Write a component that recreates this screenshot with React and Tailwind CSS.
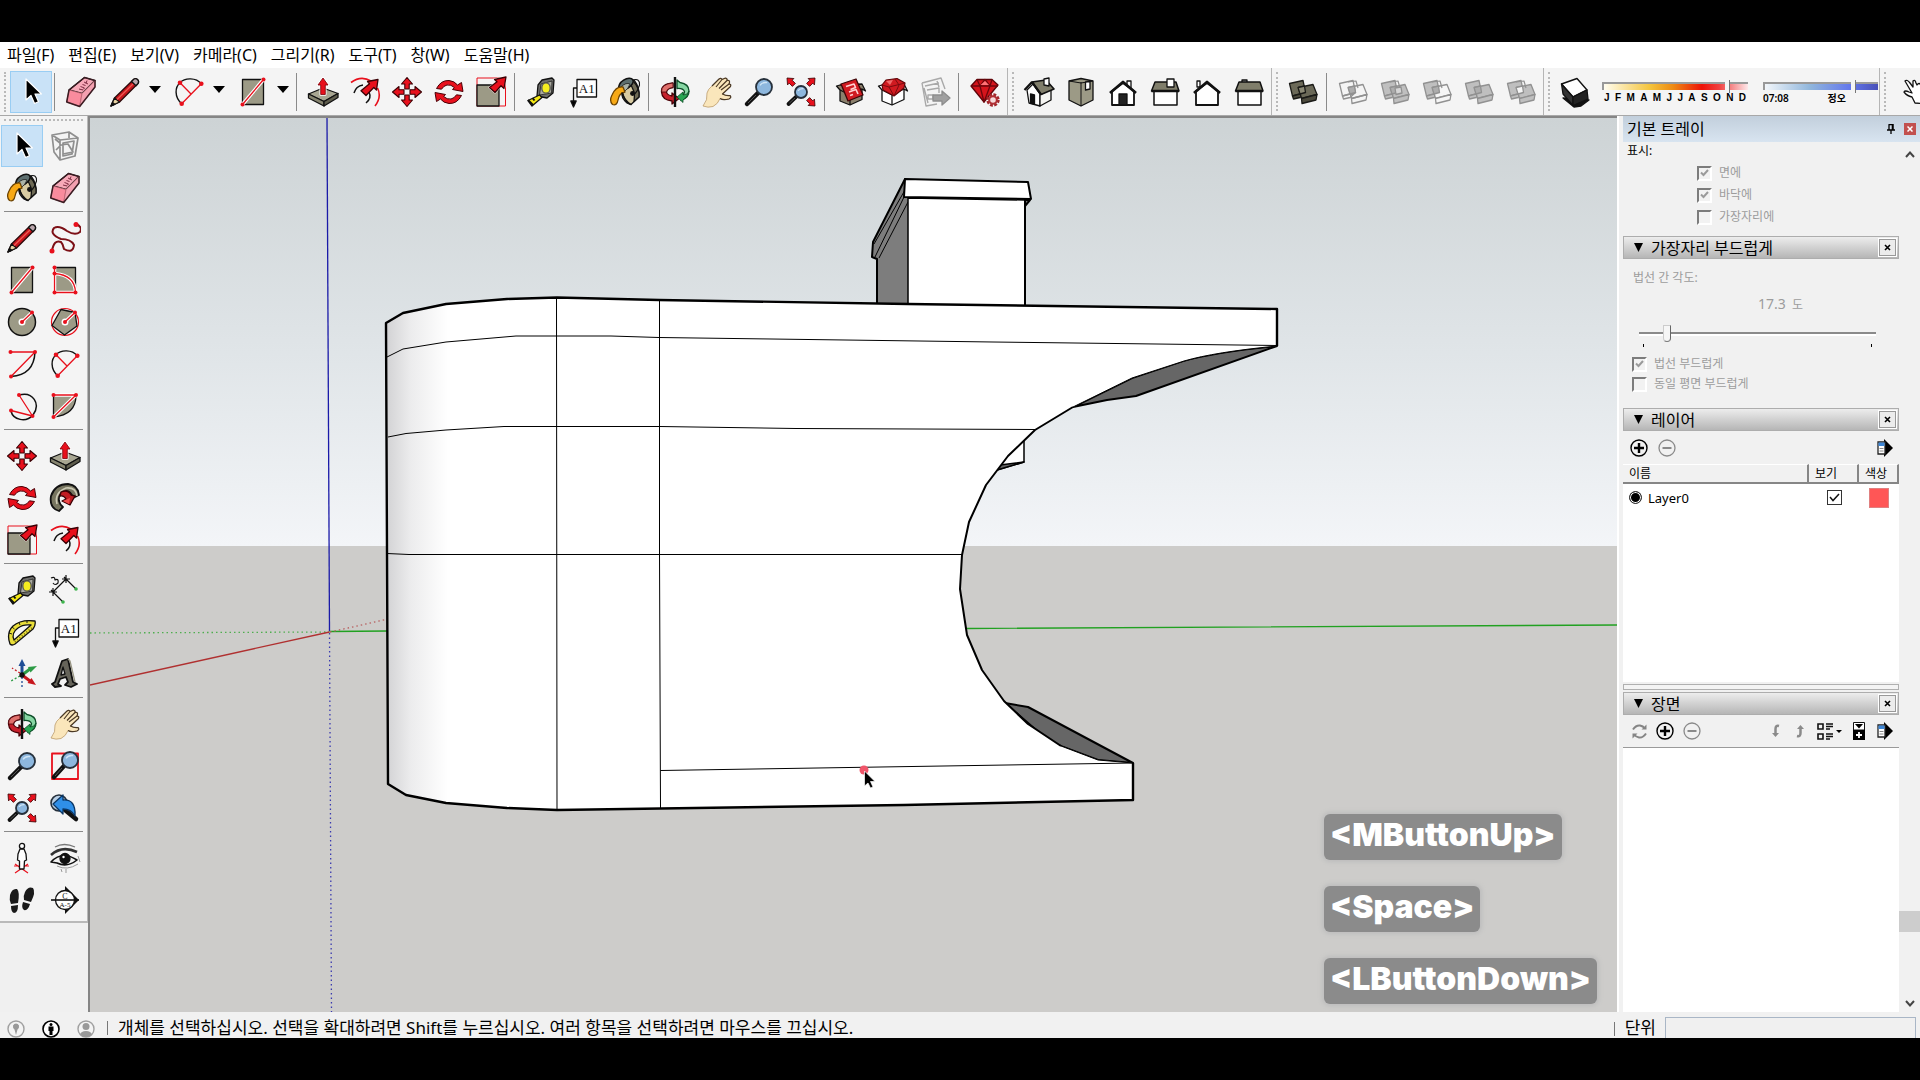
import React from "react";

const RED = "#e8101c";
const OLIVE = "#9c9a86";

function Icon({ children, size = 32 }) {
  return (
    <svg viewBox="0 0 32 32" width={size} height={size} fill="none" stroke="#111" strokeWidth="1.3" strokeLinejoin="round" aria-hidden="true" className="shrink-0">
      {children}
    </svg>
  );
}

function RedArrow({ x, y, r = 0, s = 1, stroke = "#300" }) {
  return (
    <path
      d="M0 0 L6 7 H2.8 V13 H-2.8 V7 H-6 Z"
      transform={`translate(${x} ${y}) rotate(${r}) scale(${s})`}
      fill={RED}
      stroke={stroke}
      strokeWidth="1"
    />
  );
}

function Dot({ x, y, r = 2 }) {
  return <circle cx={x} cy={y} r={r} fill={RED} stroke="none" />;
}

const Cursor = () => (
  <Icon>
    <path d="M11 3 V24 L16 19.5 L19.5 27.5 L23.5 25.8 L20 18 H26.5 Z" fill="#000" stroke="#fff" strokeWidth="1.2" />
  </Icon>
);
const Eraser = () => (
  <Icon>
    <path d="M19.5 1.5 L30 4.5 L17 17.5 L4 14 Z" fill="#f7a9b8" />
    <path d="M4 14 L17 17.5 L14.7 30.5 L1.7 26 Z" fill="#f98b9d" stroke="#b9606f" strokeWidth="0.8" />
    <path d="M17 17.5 L30 4.5 V11 L14.7 30.5 Z" fill="#f3a0b0" stroke="#b9606f" strokeWidth="0.8" />
    <path d="M19.5 1.5 L30 4.5 V11 L14.7 30.5 L1.7 26 L4 14 Z" stroke="#3a1c22" strokeWidth="1.5" />
    <path d="M14 13 l4 1 M15.500 10.500 l4 1.500 l-1.500 1.500 M17.500 8.500 l3 1 M19 6 l4 2 M21 7.500 l1 -3" stroke="#7d2c42" strokeWidth="1" />
  </Icon>
);
const Pencil = () => (
  <Icon>
    <path d="M2 30 L5.5 22 L24 4 Q26 1.5 28.5 3.5 Q30.5 6 28.5 8 L10.5 26 Z" fill="#c5141c" stroke="#2a0a0a" />
    <path d="M2 30 L5.5 22 L10.5 26 Z" fill="#e9d3a4" />
    <path d="M2 30 L3.5 26.5 L5.7 28.3 Z" fill="#111" />
    <path d="M22.5 5.5 L27 9.8 L29 7.5 Q30.5 5.5 28.5 3.5 Q26 1.5 24 4 Z" fill="#b9a5ab" />
    <path d="M8 23.5 L24 8" stroke="#ee5a52" />
  </Icon>
);
const PieArc = () => (
  <Icon>
    <path d="M8.7 27.7 C1 21 2 11 7 6.7 C12 1.5 23 1.5 28.3 7.7" strokeWidth="1.4" />
    <path d="M7 6.7 L18 18 M8.7 27.7 L28.3 7.7" stroke={RED} />
    <Dot x={7} y={6.7} r={2.3} /><Dot x={28.3} y={7.7} r={2.3} /><Dot x={8.7} y={27.7} r={2.3} />
  </Icon>
);
const Rect = () => (
  <Icon>
    <path d="M5.5 3.5 H26.5 V28.5 H5.5 Z" fill={OLIVE} />
    <path d="M5.5 28.5 L26.5 3.5" stroke="#fff" strokeWidth="3.6" />
    <path d="M5.5 28.5 L26.5 3.5" stroke={RED} />
    <Dot x={5.5} y={28.5} /><Dot x={26.5} y={3.5} />
  </Icon>
);
const PushPull = () => (
  <Icon>
    <path d="M1.5 18 L16 12 L31 17.5 L17 25.5 Z" fill="#a8a692" />
    <path d="M1.5 18 L17 25.5 V30 L1.5 22 Z" fill="#86846f" />
    <path d="M17 25.5 L31 17.5 V21.5 L17 30 Z" fill="#5f5d4d" />
    <path d="M16 2 L21 9 H18.3 V18.5 H13.7 V9 H11 Z" fill={RED} stroke="#fff" strokeWidth="2.4" />
    <path d="M16 2 L21 9 H18.3 V18.5 H13.7 V9 H11 Z" fill={RED} stroke="#7a0008" strokeWidth=".8" />
  </Icon>
);
const Offset = () => (
  <Icon>
    <path d="M2 6.5 Q12 -1 22 5 M28.5 12 Q33 21 26 30" stroke={RED} strokeWidth="1.6" />
    <path d="M5 17 Q7 10 14 9 M20 16 Q23 22 17 27" strokeWidth="1.5" />
    <path d="M29 3.5 L27.5 14 L24.8 11.5 L17 19.5 L12 14.8 L20.5 7.8 L18.5 5.5 Z" fill={RED} stroke="#3a0004" />
  </Icon>
);
const Move = () => (
  <Icon>
    {[0, 90, 180, 270].map((a) => (
      <path key={a} d="M16 1.5 L21.5 8 H18.2 V13 H13.8 V8 H10.5 Z" transform={`rotate(${a} 16 16)`} fill={RED} stroke="#3a0004" strokeWidth="1.1" />
    ))}
  </Icon>
);
const Rotate = () => (
  <Icon>
    {[0, 180].map((a) => (
      <path key={a} d="M3.5 12.5 Q8 4 16 4.5 Q21.5 5 24.5 9 L28.5 6.5 L30 15.5 L19.5 13.5 L21.3 11.5 Q18 8.3 14 9 Q10.5 9.8 8.5 13.2 Z" transform={`rotate(${a} 16 16)`} fill={RED} stroke="#4a0006" strokeWidth="1" />
    ))}
  </Icon>
);
const Scale = () => (
  <Icon>
    <path d="M2 2 H30.5 V30 H2 Z" stroke={RED} strokeWidth="1" />
    <path d="M2 9 H24 V30 H2 Z" fill={OLIVE} />
    <path d="M31 1 L29 12.5 L26 9.8 L20 16.5 L14.5 11.5 L22 5.8 L19.5 3.5 Z" fill={RED} stroke="#fff" strokeWidth="2" />
    <path d="M31 1 L29 12.5 L26 9.8 L20 16.5 L14.5 11.5 L22 5.8 L19.5 3.5 Z" fill={RED} stroke="#3a0004" />
  </Icon>
);
const Tape = () => (
  <Icon>
    <path d="M13 9 L17 4 L27 2 L29 4 L28 17 L22 22 L12 20 Z" fill="#6f6f6c" />
    <path d="M16 8 L27 5 L26.5 17 L14.5 19 Z" fill="#a9a9a0" strokeWidth=".7" />
    <ellipse cx="21" cy="12" rx="4.2" ry="5.2" fill="#f6ee20" stroke="#555" />
    <path d="M14.5 19 L17 21.5 L7 30 L3 24.5 Z" fill="#f4e814" />
    <path d="M3 24 L8 29 M7.5 22 L9.5 24.5" strokeWidth="2" />
  </Icon>
);
const TextTool = () => (
  <Icon>
    <path d="M10 3.5 H29.5 V21 H10 Z" fill="#fff" />
    <path d="M10 12 H6.5 V27" />
    <path d="M3.8 25 H9.2 L6.5 31 Z" fill="#000" />
    <text x="19.8" y="16.500" textAnchor="middle" fontFamily="Liberation Serif" fontSize="13" fill="#111" stroke="none">A1</text>
  </Icon>
);
const Paint = () => (
  <Icon>
    <path d="M13 10 L25 4 Q31 12 30 21 L22 28.500 Q14 27 13 10 Z" fill="#d8cba2" />
    <path d="M24 5 Q31 12 30 21 L25 25.500 Q27 14 20 7 Z" fill="#6e6a55" />
    <ellipse cx="17" cy="8" rx="8" ry="4.500" transform="rotate(-32 17 8)" fill="#5d6f6f" strokeWidth="1.600" />
    <path d="M12 11 Q17 6 21 8 Q20 12 14 17 Z" fill="#aab3a8" strokeWidth=".700" />
    <path d="M14 11 Q7 10 3 19 Q0 25 3.5 28.5 Q8 30 9 24 Q10 17 16 16 Z" fill="#f7a916" stroke="#6b4200" />
    <path d="M24 4 Q31 2 30.500 9 Q29 15 25 19" strokeWidth="1.100" />
    <path d="M13 17 Q16 25 22 28.500 L18 27 Q12 22 13 17 Z" fill="#4e4a3a" />
    <circle cx="23.5" cy="17.5" r="1.8" fill="#111" />
  </Icon>
);
const Orbit = () => (
  <Icon>
    <path d="M14 7 Q2 8 2.5 16 Q3 24 13 25 V28 L20 22.5 L13 17 V20 Q8 19 7.5 16 Q8 12 14 11.5 Z" fill="#c8202c" stroke="#4a0006" />
    <path d="M14 7 Q2 8 2.500 16 L7.500 16 Q8 12 14 11.500 Z" fill="#e0706c" stroke="#4a0006" strokeWidth=".800" />
    <path d="M18 7 V4 L21 6.5 Q30 8 30 15 Q30 22 22 24.5 V20 Q25.5 18.5 25.5 15.5 Q24 12 18 12.5 Z" fill="#86d6a3" stroke="#0c4d27" />
    <path d="M24 19 V16 L18 21 L24 26.5 V24 Q29 21 30 15 Q29 19 24 19 Z" fill="#27a552" stroke="#0c4d27" strokeWidth=".8" />
    <path d="M16 1 V31" strokeWidth="2.4" />
  </Icon>
);
const Hand = () => (
  <Icon>
    <path d="M2 30 Q7 24 6 17 Q7 13 11 10 L18 3 Q20 1.5 21 3.5 L24 2.2 Q26.5 2 26 4.5 Q29 3.8 28.5 6.5 L28 8 Q30.5 8 29.5 10.5 L21.5 18 Q25 20 29 19.5 Q31 21.5 28 23 Q22 24.5 19 22.5 Q17 28 12 30.5 Q7 32 2 30 Z" fill="#fae6bb" stroke="#bd9c6a" strokeWidth=".8" />
    <path d="M11 10 L18 3 Q20 1.5 21 3.5 L24 2.2 Q26.5 2 26 4.5 Q29 3.8 28.5 6.5 L28 8 Q30.5 8 29.5 10.5 L21.5 18 Q25 20 29 19.5 Q31 21.5 28 23 Q22 24.5 19 22.5 M15 11 L21 3.5 M18 12.5 L26 4.5 M20 14 L28 8" stroke="#4a3926" strokeWidth="1.2" />
  </Icon>
);
function Lens({ x = 21, y = 11, r = 8, hx = 4, hy = 28, w = 4.5 }) {
  return (
    <g>
      <path d={`M${x - r * 0.7} ${y + r * 0.7} L${hx} ${hy}`} stroke="#111" strokeWidth={w} strokeLinecap="round" />
      <path d={`M${x - r} ${y + r} L${hx + 1} ${hy - 1}`} stroke="#555" strokeWidth="1" />
      <circle cx={x} cy={y} r={r} fill="#8db7de" stroke="#26303b" strokeWidth="1.8" />
      <path d={`M${x - r * 0.5} ${y - r * 0.2} Q${x - r * 0.2} ${y - r * 0.65} ${x + r * 0.4} ${y - r * 0.55}`} stroke="#cfe4f5" strokeWidth="1.4" />
    </g>
  );
}
const Zoom = () => <Icon><Lens /></Icon>;
const ZoomWindow = () => (
  <Icon>
    <path d="M3 3.5 H29 V29 H3 Z" stroke={RED} strokeWidth="1.8" />
    <Lens x={21} y={10} r={8} hx={5} hy={27} />
  </Icon>
);
const ZoomExtents = () => (
  <Icon>
    <RedArrow x={2} y={2} r={-45} s={0.75} />
    <RedArrow x={30} y={2} r={45} s={0.75} />
    <RedArrow x={30} y={30} r={135} s={0.75} />
    <Lens x={16} y={16} r={6} hx={3.5} hy={28} w={3.8} />
  </Icon>
);
const Previous = () => (
  <Icon>
    <circle cx="10" cy="11" r="8" fill="#b9cfe4" stroke="#26303b" strokeWidth="1.6" />
    <path d="M16 18 L27 27" strokeWidth="4.5" strokeLinecap="round" />
    <path d="M4 12 L14 3 V8 Q27 7 26 24 Q22 17 14 17 V22 Z" fill="#2f8fe8" stroke="#0b3562" />
  </Icon>
);
function BoxIcon({ gem }) {
  return (
    <Icon>
      <path d="M5 9 L1.500 10 L5 14 V25 L15 29 L27 23.500 V13 L30.500 15 L27 8 Z" fill={gem ? "#fff" : "#8b806c"} strokeWidth="1.3" />
      <path d="M5 14 L15 19 L27 13 M15 19 V29" fill="none" strokeWidth="1.3" />
      {gem ? (
        <g>
          <path d="M5 9 L9 4 L20 2.500 L28 7 L27 12 L17 20 L6 14 Z" fill="#d01a20" stroke="#5e0508" strokeWidth="1.2" />
          <path d="M5 9 L12 11 L28 7 M12 11 L17 20 L22 9 L18 3" fill="none" stroke="#7c0a0e" strokeWidth="1" />
          <path d="M9 5 L16 4 L13 9 Z" fill="#ee6b6b" stroke="none" />
        </g>
      ) : (
        <g>
          <path d="M6 8 L21 3 L28 19 L13 25 Z" fill="#d01a20" stroke="#3d0507" />
          <path d="M11 10.500 L19 8 L20.500 11.500 L15.500 13.500 M14 16 L21 13.500 L23 18 M15 19.500 L18 18.500" stroke="#ffd3d3" strokeWidth="1.6" />
        </g>
      )}
    </Icon>
  );
}
const Warehouse = () => <BoxIcon />;
const ExtWarehouse = () => <BoxIcon gem />;
const SendLayout = () => (
  <Icon>
    <path d="M3 7 L22 2 L26 13 M3 7 L7 30 L18 28 M6 10 L20 7 M5 12 L9 27 M8 14 L20 12 V17 M9 19 h5 v4 h-5 Z M18 5 l2 6" stroke="#a9a9a9" strokeWidth="1.4" />
    <path d="M14 19 H23 V15 L31 22 L23 29 V25 H14 Z" fill="#a0a0a0" stroke="#8d8d8d" />
  </Icon>
);
const Ruby = () => (
  <Icon>
    <path d="M2 10 L8 3.5 H23 L29 9 L15 26 Z" fill="#d5141c" stroke="#5d0409" />
    <path d="M2 10 H29 M8 3.5 L11 10 L16 3.5 L21 10 L23 3.5 M11 10 L15 26 L21 10" stroke="#6e060c" />
    <path d="M11.5 9 L16 5 L20 9 Z" fill="#ff7377" stroke="none" />
    <circle cx="24" cy="24" r="5.4" stroke="#a3262b" strokeWidth="2.6" strokeDasharray="2.8 1.4" fill="none" />
    <circle cx="24" cy="24" r="3.8" fill="#f6dada" stroke="#b03035" strokeWidth="2" />
  </Icon>
);
const HouseIso = () => (
  <Icon>
    <path d="M4 14 L10 8 L17 18 V30 L6 27 Z" fill="#fff" />
    <path d="M17 19 L28 13 V24 L17 30 Z" fill="#f5f5f2" />
    <path d="M9 6 L23 4 L31 13 L18 18.5 Z" fill="#807e6b" strokeWidth="1.6" />
    <path d="M9 6 L1.5 14 M9 6 L18 18.5" strokeWidth="2.2" />
    <path d="M21 3 L26 2 V10 L21 9 Z" fill="#fff" />
    <path d="M7.500 18 L11.5 19 V28 L7.500 27 Z" fill="#111" />
  </Icon>
);
const BoxView = () => (
  <Icon>
    <path d="M4 5 L16 2.500 L28 5 V24 L16 30 L4 24 Z" fill={OLIVE} />
    <path d="M16 6 V30 M4 5 L16 7 L28 5" strokeWidth="1" />
    <path d="M20.500 6 L25 5.500 V13 L20.500 14 Z" fill="#fff" />
  </Icon>
);
const HouseFront = ({ back }) => (
  <Icon>
    {back ? <path d="M6 5 H9 V11 H6 Z" fill="#fff" /> : <path d="M20 5 H24 V12 H20 Z" fill="#fff" />}
    <path d="M5 15 L16 7 L27 15 V29 H5 Z" fill="#fff" strokeWidth="1.8" />
    <path d="M3 17 L16 6 L29 17" strokeWidth="2.800" />
    {back ? null : <path d="M12 18 H20 V29 H12 Z" fill="#222" />}
  </Icon>
);
const HouseBack = () => <HouseFront back />;
const HouseSide = ({ chimney }) => (
  <Icon>
    <path d="M5 14 H28 V29 H5 Z" fill="#fff" strokeWidth="1.500" />
    {chimney ? null : <path d="M9 6 V4 H14 V6" fill="#aaa" />}
    <path d="M6 6 H27 L30 15 H2.500 Z" fill="#807e6b" strokeWidth="1.500" />
    <path d="M2.500 15 H30" strokeWidth="2.500" />
    {chimney ? <path d="M18 3 H25 V11 H18 Z" fill="#fff" /> : null}
  </Icon>
);
const HouseRight = () => <HouseSide chimney />;

function Solid({ dark, variant }) {
  const s = dark ? "#1a1a17" : "#919191";
  const f = dark ? "#6b6958" : "#bfbfbf";
  const wire = variant === "wire";
  const back = wire ? "none" : f;
  const front = wire ? "none" : variant === "sub2" ? "#f6f6f6" : f;
  const common = variant === "hole" ? "#f6f6f6" : dark ? "#8b8975" : "#adadad";
  return (
    <Icon>
      <path d="M2.500 7.500 L16 4.500 L18.500 16.500 L5.500 20 Z" fill={back} stroke={s} />
      <path d="M5.500 20 L6.500 23 L13 21.500 L18.500 16.500 Z" fill={dark ? "#4c4a3d" : back} stroke={s} />
      <path d="M11.500 11.500 L26 8.500 L30 18.500 L14.500 22.500 Z" fill={front} stroke={s} />
      <path d="M14.500 22.500 L30 18.500 L29 24 L15 27.500 Z" fill={dark ? "#4c4a3d" : front} stroke={s} />
      <path d="M11 11.500 L17.500 10 L18.500 16.500 L13 18 Z" fill={common} stroke={s} />
      <path d="M11 6 L19 5 L21 12" stroke={s} strokeWidth={variant ? 1.2 : 0} />
      {variant === "ring" ? <path d="M16 12 L22 11 L23 17 L17 18.500 Z" fill="#d5d5d5" stroke={s} /> : null}
    </Icon>
  );
}
const OuterShell = () => <Solid dark />;
const Intersect = () => <Solid variant="wire" />;
const Union = () => <Solid variant="ring" />;
const Subtract = () => <Solid variant="sub2" />;
const Trim = () => <Solid />;
const Split = () => <Solid variant="hole" />;
const Shadow = () => (
  <Icon>
    <path d="M4 22 L30 24 L22 30 L15 31 Z" fill="#111" />
    <path d="M2.500 8 L18 2.500 L28 14 L14 21 Z" fill="#fff" strokeWidth="1.400" />
    <path d="M2.500 8 L14 21 V29.500 L4 18 Z" fill="#333" />
    <path d="M14 21 L28 14 L29 23 L14 29.500 Z" fill="#222" />
  </Icon>
);
const PointHand = () => (
  <Icon>
    <path d="M10 5 Q12 3 15 7 L18 11 V5 Q20 3 21 7 L22 9 Q24 6 26 9 Q28 7 31 9 V28 L20 27 L17 21 Q12 20 9 16 Q10 14 14 16 L17 17 Z" fill="#fff" strokeWidth="1.300" />
  </Icon>
);
const Component = () => (
  <Icon>
    <path d="M3 5 L20 2 L29 8 L26 26 L11 30 L5 22 Z M3 5 L11 10 L29 8 M11 10 V30 M6 9 L11 13 M14 13 L25 11 L23 24 L14 26 Z M20 2 V8 M7 20 L12 15 L19 14 L24 22 L14 24" stroke="#8f8f8f" strokeWidth="1.700" />
  </Icon>
);
const Freehand = () => (
  <Icon>
    <path d="M3 29 Q5 17 12 20 Q14 22 15 27 Q24 32 25 23 Q22 17 12 17 Q0 12 5 6 Q10 3 18 9 Q26 14 31 10 Q34 5 27 2" stroke="#7d1016" strokeWidth="2" />
    <Dot x={3} y={29} r={2.500} /><Dot x={27} y={2.500} r={2.500} />
  </Icon>
);
const RotRect = () => (
  <Icon>
    <path d="M5.500 3.500 H26.500 V28.500 H5.500 Z" fill={OLIVE} />
    <path d="M5.500 3 V28.500 H26.500 Q26 11 5.500 9.500" stroke="#fff" strokeWidth="3.500" />
    <path d="M5.500 3 V28.500 H26.500 Q26 11 5.500 9.500" stroke={RED} />
    <Dot x={5.500} y={3.500} /><Dot x={5.500} y={9.500} /><Dot x={5.500} y={28.500} /><Dot x={26.500} y={28.500} />
  </Icon>
);
const Circle = () => (
  <Icon>
    <circle cx="16" cy="16" r="13.500" fill={OLIVE} strokeWidth="1.500" />
    <path d="M16 16 L26 6.500" stroke="#fff" strokeWidth="3.500" />
    <circle cx="16" cy="16" r="3.500" fill="#fff" stroke="none" />
    <path d="M16 16 L26 6.500" stroke={RED} />
    <Dot x={16} y={16} /><Dot x={26} y={6.500} />
  </Icon>
);
const Polygon = () => (
  <Icon>
    <circle cx="16" cy="16" r="13.500" stroke={RED} strokeWidth="1.200" />
    <path d="M12 3.500 L26 6.500 L28 20 L15.500 29 L3 19.500 Z" fill={OLIVE} />
    <path d="M16 16 L26 6.500" stroke="#fff" strokeWidth="3.500" />
    <circle cx="16" cy="16" r="3.500" fill="#fff" stroke="none" />
    <path d="M16 16 L26 6.500" stroke={RED} />
    <Dot x={16} y={16} /><Dot x={26} y={6.500} />
  </Icon>
);
const Arc2 = () => (
  <Icon>
    <path d="M29 4 Q28 27 5 28.500" strokeWidth="1.500" />
    <path d="M4.500 4 H29 L5 28.500" stroke={RED} />
    <Dot x={4.500} y={4} /><Dot x={29} y={4} /><Dot x={5} y={28.500} />
  </Icon>
);
const Arc3 = () => (
  <Icon>
    <path d="M13 5 C27 1 35 14 27 25 C20 33 7 30 5 21" strokeWidth="1.500" />
    <path d="M13 5 L26.500 26 L5 20.500" stroke={RED} />
    <Dot x={13} y={5} /><Dot x={26.500} y={26} /><Dot x={5} y={20.500} />
  </Icon>
);
const Pie = () => (
  <Icon>
    <path d="M4.500 5 H27 Q27 25 4.500 27 Z" fill={OLIVE} />
    <path d="M4.500 5 H27 L4.500 27" stroke="#fff" strokeWidth="3.500" />
    <path d="M4.500 5 H27 L4.500 27" stroke={RED} />
    <Dot x={4.500} y={5} /><Dot x={27} y={5} /><Dot x={4.500} y={27} />
  </Icon>
);
const FollowMe = () => (
  <Icon>
    <path d="M10 29 Q0 26 2 14 Q6 2 19 2 Q29 3 30 13 L24 16 Q22 9 17 9 Q9 11 10 19 Q11 23 14 25 Z" fill="#77755f" strokeWidth="1.800" />
    <path d="M8 22 Q5 11 17 6 Q27 5 28 14" stroke="#ccc9b4" strokeWidth="1.600" />
    <path d="M12 10 Q19 7 22 13 L26 14 L21 23 L13 19 L17 17 Q15 13 11 14 Z" fill="#c21c22" stroke="#3a0004" />
    <path d="M20 22 L14 19 L21 16" fill="#f04a4a" stroke="none" />
  </Icon>
);
const Dimension = () => (
  <Icon>
    <path d="M4 18 L17 5 M4 18 L14 28 M17 5 L27 15 M0 18 H8 M4 14 V22 M2 16 L6 20 M13 5 H21 M17 1 V9 M15 3 L19 7" strokeWidth="1.200" />
    <path d="M2 4 Q6 2 6 6 Q10 4 9 9 Q6 12 4 9" strokeWidth="1.200" />
    <circle cx="14" cy="28" r="1.800" fill="#3cb44b" stroke="none" /><circle cx="27" cy="15" r="1.800" fill="#3cb44b" stroke="none" />
  </Icon>
);
const Protractor = () => (
  <Icon>
    <path d="M4 28 Q0 17 7 10 Q15 3 29 5 Q30 9 27 13 L9 28 Q6 30 4 28 Z" fill="#eadf3a" />
    <path d="M8 24 Q5 17 12 12 Q17 8 25 9 Z" fill="#f6f6f6" />
    <path d="M9 26 L27 11" stroke="#7a7310" strokeDasharray="1 2" strokeWidth="2" />
    <path d="M3 17 L6 18 M6 11 L8.500 13 M13 6.500 L14 9 M21 4.500 V7" strokeWidth=".900" />
  </Icon>
);
const Axes = () => (
  <Icon>
    <path d="M16 17 V8" stroke="#1f4e96" strokeWidth="3" /><path d="M16 1 L19.500 8 H12.500 Z" fill="#1f4e96" stroke="none" />
    <path d="M16 17 L24 11" stroke="#2c9b45" strokeWidth="3" /><path d="M31 8 L24.500 14.500 L22 9 Z" fill="#2c9b45" stroke="none" />
    <path d="M16 17 L24 23" stroke="#c7161d" strokeWidth="3" /><path d="M30 27 L21.500 25 L25.500 20 Z" fill="#c7161d" stroke="none" />
    <path d="M16 19 V29" stroke="#1f4e96" strokeDasharray="2 2" /><path d="M14 18 L5 23" stroke="#2c9b45" strokeDasharray="2 2" /><path d="M14 15 L6 10" stroke="#c7161d" strokeDasharray="2 2" />
    <circle cx="16" cy="17" r="2" fill="#111" />
  </Icon>
);
const Text3D = () => (
  <Icon>
    <path d="M13 3 L19 1 L24 24 L28 26 L22 29 L16 27 L19 24 L17 19 L11 21 L9 26 L12 28 L6 29 L3 26 L6 24 Z" fill="#66645a" strokeWidth="1.800" />
    <path d="M14 9 L12 17 L16 16 Z" fill="#eee" />
    <path d="M19 1 L21 3 L26 24" stroke="#999684" />
  </Icon>
);
const PositionCamera = () => (
  <Icon>
    <path d="M9 22 L22 31 M22 22 L9 31 M8 24 H23" stroke={RED} strokeWidth="1.200" />
    <path d="M14 7 L12 12 L11.500 18 L13.500 19 L13.500 27 H18 L18.500 19 L20.500 18 L20 12 L18 7 Z" fill="#fff" />
    <circle cx="16" cy="4" r="2.600" fill="#fff" />
  </Icon>
);
const LookAround = () => (
  <Icon>
    <path d="M2 13 Q13 3 28 10" strokeWidth="2.600" stroke="#333" />
    <path d="M2 20 Q13 8 28 18 Q18 26 8 21 Z" fill="#f2f2f2" strokeWidth="1.600" />
    <circle cx="16" cy="16.500" r="5" fill="#111" /><circle cx="14.500" cy="15" r="1.200" fill="#fff" stroke="none" />
    <path d="M8 24 Q18 29 29 22 M12 27 L13 30 M17 27 L17 31 M29 14 L31 20" stroke="#999" strokeWidth="1" />
    <path d="M6 5 Q15 0 26 5" stroke="#777" />
  </Icon>
);
const Walk = () => (
  <Icon>
    <path d="M4 11 Q6 4 11 5 Q14 8 12 19 L5 20 Q3 16 4 11 Z M5 22 L12 21 Q12 29 8 29 Q5 28 5 22 Z" fill="#1a1a1a" stroke="none" />
    <path d="M19 8 Q22 2 27 4 Q30 8 25 18 L18 16 Q17 12 19 8 Z M17 18 L24 20 Q22 27 18 26 Q15 24 17 18 Z" fill="#1a1a1a" stroke="none" />
  </Icon>
);
const Section = () => (
  <Icon>
    <path d="M16 2 L30 16 L16 30 Z" fill="#111" stroke="none" />
    <circle cx="16" cy="16" r="9.500" fill="#fff" strokeWidth="1.300" />
    <path d="M2 16 H30" strokeWidth="1.600" />
    <text x="16" y="14.500" textAnchor="middle" fontSize="8" fontFamily="Liberation Serif" fill="#111" stroke="none">C</text>
    <text x="16" y="23" textAnchor="middle" fontSize="7" fontFamily="Liberation Serif" fill="#111" stroke="none">A-5</text>
  </Icon>
);

function Tool({ icon: I, label, active, wide }) {
  return (
    <button
      type="button"
      aria-label={label}
      className={
        "flex h-[42px] shrink-0 items-center justify-center " +
        (wide ? "w-[46px] " : "w-[42px] ") +
        (active ? "border border-[#99cdf3] bg-[#c9e2f7]" : "")
      }
    >
      <I />
    </button>
  );
}

function DropTool({ icon, label }) {
  return (
    <div className="flex shrink-0 items-center">
      <Tool icon={icon} label={label} wide />
      <button type="button" aria-label={label + " 더보기"} className="flex h-[42px] w-[18px] items-center justify-start pb-1 pl-px">
        <svg width="12" height="7" viewBox="0 0 12 7" aria-hidden="true"><path d="M0 0 H12 L6 7 Z" fill="#000" /></svg>
      </button>
    </div>
  );
}

const Sep = () => <div className="h-[38px] w-2 shrink-0 pl-[2px]"><div className="h-full w-px bg-[#8a8a8a]" /></div>;
const Band = () => (
  <div className="flex h-full w-3 shrink-0 gap-1">
    <div className="ml-px h-full w-px bg-[#b5b5b5]" />
    <div className="my-1 w-0 border-l-2 border-dotted border-[#b9b9b9]" />
  </div>
);

const MENUS = ["파일(F)", "편집(E)", "보기(V)", "카메라(C)", "그리기(R)", "도구(T)", "창(W)", "도움말(H)"];

function TopBar() {
  return (
    <div role="toolbar" aria-label="큰 도구 모음" className="flex h-[48px] shrink-0 items-center overflow-hidden border-b border-[#a8a8a8] bg-[#f4f4f4]">
      <div className="flex h-full w-[10px] shrink-0 items-center pl-1"><div className="h-[40px] border-l-2 border-dotted border-[#b9b9b9]" /></div>
      <Tool icon={Cursor} label="선택" active />
      <Sep />
      <Tool icon={Eraser} label="지우개" />
      <DropTool icon={Pencil} label="선" />
      <DropTool icon={PieArc} label="호" />
      <DropTool icon={Rect} label="직사각형" />
      <Sep />
      <Tool icon={PushPull} label="밀기/끌기" />
      <Tool icon={Offset} label="오프셋" />
      <Tool icon={Move} label="이동" />
      <Tool icon={Rotate} label="회전" />
      <Tool icon={Scale} label="배율" />
      <Sep />
      <Tool icon={Tape} label="줄자" />
      <Tool icon={TextTool} label="텍스트" />
      <Tool icon={Paint} label="페인트 통" />
      <Sep />
      <Tool icon={Orbit} label="궤도" />
      <Tool icon={Hand} label="이동 보기" />
      <Tool icon={Zoom} label="확대/축소" />
      <Tool icon={ZoomExtents} label="범위 확대" />
      <Sep />
      <Tool icon={Warehouse} label="3D Warehouse" />
      <Tool icon={ExtWarehouse} label="Extension Warehouse" />
      <Tool icon={SendLayout} label="LayOut으로 보내기" />
      <Sep />
      <Tool icon={Ruby} label="확장 관리자" />
      <Band />
      <Tool icon={HouseIso} label="등각" />
      <Tool icon={BoxView} label="맨 위" />
      <Tool icon={HouseFront} label="앞면" />
      <Tool icon={HouseRight} label="오른쪽" />
      <Tool icon={HouseBack} label="뒤" />
      <Tool icon={HouseSide} label="왼쪽" />
      <Band />
      <Tool icon={OuterShell} label="외부 셸" />
      <Sep />
      <Tool icon={Intersect} label="교차" />
      <Tool icon={Union} label="결합" />
      <Tool icon={Subtract} label="빼기" />
      <Tool icon={Trim} label="트림" />
      <Tool icon={Split} label="분할" />
      <Band />
      <Tool icon={Shadow} label="그림자" />
      <div className="ml-[6px] w-[146px] shrink-0">
        <input
          type="range" aria-label="날짜" min="0" max="100" defaultValue="87"
          className="block h-[13px] w-full appearance-none bg-transparent [&::-webkit-slider-runnable-track]:h-[8px] [&::-webkit-slider-runnable-track]:border-t-2 [&::-webkit-slider-runnable-track]:border-l-2 [&::-webkit-slider-runnable-track]:border-[#999] [&::-webkit-slider-runnable-track]:bg-[linear-gradient(90deg,#fffdf0_0%,#f4c43c_32%,#ee8a12_48%,#ee1208_68%,#f04040_80%,#fde8ea_100%)] [&::-webkit-slider-thumb]:-mt-1 [&::-webkit-slider-thumb]:h-[13px] [&::-webkit-slider-thumb]:w-[5px] [&::-webkit-slider-thumb]:appearance-none [&::-webkit-slider-thumb]:border-r [&::-webkit-slider-thumb]:border-[#777] [&::-webkit-slider-thumb]:bg-[#f4f4f4]"
        />
        <div className="flex justify-between px-[2px] font-['Liberation_Sans'] text-[10px] leading-[12px] font-bold text-black">
          {"JFMAMJJASOND".split("").map((m, i) => <span key={i}>{m}</span>)}
        </div>
      </div>
      <div className="ml-[15px] w-[115px] shrink-0">
        <input
          type="range" aria-label="시간" min="0" max="100" defaultValue="80"
          className="block h-[13px] w-full appearance-none bg-transparent [&::-webkit-slider-runnable-track]:h-[8px] [&::-webkit-slider-runnable-track]:border-t-2 [&::-webkit-slider-runnable-track]:border-l-2 [&::-webkit-slider-runnable-track]:border-[#999] [&::-webkit-slider-runnable-track]:bg-[linear-gradient(90deg,#f2f6fa_0%,#90b6dc_40%,#6478ec_75%,#4850b8_100%)] [&::-webkit-slider-thumb]:-mt-1 [&::-webkit-slider-thumb]:h-[13px] [&::-webkit-slider-thumb]:w-[5px] [&::-webkit-slider-thumb]:appearance-none [&::-webkit-slider-thumb]:border-r [&::-webkit-slider-thumb]:border-[#777] [&::-webkit-slider-thumb]:bg-[#f4f4f4]"
        />
        <div className="flex justify-between pr-8 text-[10px] leading-[12px] font-semibold text-black">
          <span>07:08</span><span>정오</span>
        </div>
      </div>
      <Band />
      <Tool icon={PointHand} label="동적 구성 요소" />
    </div>
  );
}

const SIDE = [
  [[Cursor, "선택"], [Component, "구성 요소 만들기"], [Paint, "페인트 통"], [Eraser, "지우개"]],
  [[Pencil, "선"], [Freehand, "자유곡선"], [Rect, "직사각형"], [RotRect, "회전된 직사각형"], [Circle, "원"], [Polygon, "다각형"], [Arc2, "호"], [PieArc, "2점 호"], [Arc3, "3점 호"], [Pie, "파이"]],
  [[Move, "이동"], [PushPull, "밀기/끌기"], [Rotate, "회전"], [FollowMe, "따라가기"], [Scale, "배율"], [Offset, "오프셋"]],
  [[Tape, "줄자"], [Dimension, "치수"], [Protractor, "각도기"], [TextTool, "텍스트"], [Axes, "축"], [Text3D, "3D 텍스트"]],
  [[Orbit, "궤도"], [Hand, "이동 보기"], [Zoom, "확대/축소"], [ZoomWindow, "창 확대"], [ZoomExtents, "범위 확대"], [Previous, "이전"]],
  [[PositionCamera, "카메라 배치"], [LookAround, "둘러보기"], [Walk, "걷기"], [Section, "단면"]],
];

function SideBar() {
  return (
    <aside className="w-[88px] shrink-0 bg-[#f0f0f0]">
      <div role="toolbar" aria-label="큰 도구 집합" className="border-r border-b-2 border-[#b9b9b9] bg-[#f4f4f4] pt-[3px]">
        <div className="mx-1 mb-1 border-t-2 border-dotted border-[#b9b9b9]" />
        {SIDE.map((group, g) => (
          <div key={g}>
            {g > 0 && <div className="mx-1 h-2 pt-[2px]"><div className="h-px bg-[#8a8a8a]" /></div>}
            <div className="grid grid-cols-2 justify-items-center">
              {group.map(([I, label], i) => <Tool key={label} icon={I} label={label} active={g === 0 && i === 0} />)}
            </div>
          </div>
        ))}
      </div>
    </aside>
  );
}

function Model() {
  return (
    <svg viewBox="90 118 1527 894" preserveAspectRatio="xMidYMid slice" className="absolute inset-0 h-full w-full" aria-label="모델">
      <defs>
        <linearGradient id="sky" x1="0" y1="0" x2="0" y2="1"><stop offset="0" stopColor="#cdd3d5" /><stop offset="0.550" stopColor="#e0e5e8" /><stop offset="1" stopColor="#f3f5f8" /></linearGradient>
        <linearGradient id="shade" gradientUnits="userSpaceOnUse" x1="386" y1="0" x2="448" y2="0"><stop offset="0" stopColor="#d2d2d4" /><stop offset="0.400" stopColor="#ececed" /><stop offset="1" stopColor="#fff" /></linearGradient>
      </defs>
      <path d="M90 118 H1617 V546 H90 Z" fill="url(#sky)" />
      <path d="M90 546 H1617 V1012 H90 Z" fill="#cdccca" />
      <g fill="none" strokeWidth="1.300">
        <path d="M327 118 L329.500 631" stroke="#1a1aa8" />
        <path d="M329.500 633 L331.500 1012" stroke="#3a3ab0" strokeDasharray="1.500 3" />
        <path d="M329.500 631.500 L388 631 M966 628.500 L1617 625" stroke="#21a121" />
        <path d="M90 633 L329 632" stroke="#4fae4f" strokeDasharray="1.500 3" />
        <path d="M90 685 L329.500 632" stroke="#b03030" />
        <path d="M330 632 L386 619.500" stroke="#b86060" strokeDasharray="1.500 3" />
      </g>
      <g stroke="#000" strokeWidth="2" strokeLinejoin="round">
        <path d="M905 179 L873 242 L872 257 L877 259 V304 H909 V198 Z" fill="#7d7d7d" />
        <path d="M904 197 L875 257 M905 190 L874 244 M908 202 L879 258" strokeWidth="1" fill="none" />
        <path d="M1025 200 L1030 200 L1025 206 Z" fill="#777" />
        <path d="M908 198 L1025 200 V306 H908 Z" fill="#fff" strokeWidth="1.500" />
        <path d="M1025 200 V306" />
        <path d="M905 179 L1028 182 L1031 199 L904 197 Z" fill="#fff" />
        <path d="M1007 441 H1024 V462 L997 470 Z" fill="#fff" strokeWidth="1.500" />
        <path d="M1000 465 L1024 462 L997 470 Z" fill="#666" strokeWidth="1.500" />
        <path d="M1277 346 Q1215 352 1183 361 L1132 378 L1073 407 L1107 400 L1136 396 Z" fill="#666" />
        <path d="M1005 703 L1028 707 L1133 763 L1098 760 L1050 742 Z" fill="#666" />
        <path d="M386 323 L403 313 L446 304 L507 299 L557 297.500 L659 300 L908 304 L1277 309 V346 Q1215 352 1184 361 L1132 378 L1073 407 L1035 430 L1008 456 L986 485 L969 522 L962 555 L960 589 L967 635 L982 670 L1004 701 L1028 724 L1061 746 L1098 760 L1133 763 V800 L904 805 L557 810 L507 808 L446 803 L406 795 L388 784 Z" fill="url(#shade)" stroke="none" />
        <path d="M1073 407 L1035 430 L1008 456 L986 485 L969 522 L962 555 L960 589 L967 635 L982 670 L1004 701 L1028 724 L1061 746" fill="none" />
        <path d="M1277 346 V309 L908 304 L659 300 L557 297.500 L507 299 L446 304 L403 313 L386 323 L388 784 L406 795 L446 803 L507 808 L557 810 L904 805 L1133 800 V763" fill="none" strokeWidth="2.400" />
        <path d="M1277 346 Q1215 352 1184 361 L1132 378 L1073 407 M1061 746 L1098 760 L1133 763" fill="none" strokeWidth="1" />
        <g fill="none" strokeWidth="1">
          <path d="M556.500 298 L557 810 M659.500 300 V553 L660.500 808" />
          <path d="M387 357 L403 349 L446 342 L516 336 H611 L659 337.500 L993 342 L1277 345.500" />
          <path d="M388 437 L406 433.500 L446 430 L504 426.500 H660 L796 428.500 L1035 429.500" />
          <path d="M387 553.500 L409 554.500 H962" />
          <path d="M660.500 770.500 L1133 763" />
        </g>
      </g>
      <circle cx="864" cy="770" r="4.500" fill="#f0566a" />
      <path d="M864.500 771 V786 L868 783 L870.500 788 L873 787 L870.500 781.500 H875 Z" fill="#000" stroke="#fff" strokeWidth=".700" />
    </svg>
  );
}

function Viewport() {
  return (
    <main className="relative min-w-0 flex-1 overflow-hidden border-t-2 border-l-2 border-[#858585]">
      <Model />
      <div className="absolute right-0 bottom-2 flex w-[293px] flex-col items-start gap-[26px]">
        {["<MButtonUp>", "<Space>", "<LButtonDown>"].map((k) => (
          <kbd key={k} className="rounded-md bg-[#8b8b8b] px-[6px] pb-1 font-['Inter'] text-[32px] leading-[42px] font-black text-white shadow-[0_0_4px_2px_#bdbdbd]">{k}</kbd>
        ))}
      </div>
    </main>
  );
}

function GrayCheck({ label, checked }) {
  return (
    <label className="flex h-full items-center gap-[7px] text-[12px] leading-[16px] text-[#9c9c9c]">
      <span className="grid place-items-center">
        <input type="checkbox" disabled defaultChecked={checked} className="size-[15px] appearance-none border-2 border-t-[#7c7c7c] border-r-white border-b-white border-l-[#7c7c7c] bg-[#f2f2f2] [grid-area:1/1]" />
        {checked && <svg viewBox="0 0 9 8" width="9" height="8" className="pointer-events-none [grid-area:1/1]" aria-hidden="true"><path d="M1 3.500 L3.500 6 L8 1" fill="none" stroke="#9a9a9a" strokeWidth="2" /></svg>}
      </span>
      {label}
    </label>
  );
}

function PanelHead({ title }) {
  return (
    <div className="flex h-[23px] shrink-0 items-center border border-[#adadad] bg-linear-to-b from-[#ededed] to-[#b6b6b6] pr-[2px] pl-[10px]">
      <svg width="9" height="9" viewBox="0 0 9 9" aria-hidden="true"><path d="M0 0 H9 L4.500 9 Z" fill="#000" /></svg>
      <h2 className="ml-2 flex-1 text-[16px] leading-[20px] text-black">{title}</h2>
      <button type="button" aria-label={title + " 닫기"} className="flex size-[17px] items-center justify-center border border-[#999] bg-[#ececec] outline-1 outline-white">
        <svg width="7" height="7" viewBox="0 0 7 7" aria-hidden="true"><path d="M1 1 L6 6 M6 1 L1 6" stroke="#000" strokeWidth="1.600" /></svg>
      </button>
    </div>
  );
}

function IconBtn({ label, disabled, children, w = "w-[26px]" }) {
  return <button type="button" aria-label={label} disabled={disabled} className={"flex h-[26px] items-center justify-center " + w}>{children}</button>;
}
const Plus = () => <svg width="18" height="18" viewBox="0 0 18 18" aria-hidden="true" fill="none" stroke="#000"><circle cx="9" cy="9" r="8" strokeWidth="1.400" /><path d="M9 4 V14 M4 9 H14" strokeWidth="2.400" /></svg>;
const Minus = () => <svg width="18" height="18" viewBox="0 0 18 18" aria-hidden="true" fill="none" stroke="#8a8a8a"><circle cx="9" cy="9" r="8" strokeWidth="1.300" /><path d="M4.500 9 H13.500" strokeWidth="2" /></svg>;
const Details = () => (
  <svg width="16" height="18" viewBox="0 0 16 18" aria-hidden="true">
    <path d="M7 0 L16 9 L7 18 Z" fill="#000" />
    <path d="M1 3 H8 V15 H1 Z" fill="#fff" stroke="#222" strokeWidth="1.300" /><path d="M1.500 3.500 H7.500 V7 H1.500 Z" fill="#3d86d6" /><path d="M2.500 9.500 H6.500 M2.500 12 H6.500" stroke="#888" />
  </svg>
);
const Chevron = ({ d }) => <svg width="10" height="8" viewBox="0 0 10 8" aria-hidden="true"><path d={d} fill="none" stroke="#444" strokeWidth="2" /></svg>;

function Tray() {
  return (
    <aside className="flex w-[303px] shrink-0 flex-col border-l-2 border-white bg-[#f1f1f1] pl-1 text-black">
      <header className="flex h-[26px] shrink-0 items-center bg-linear-to-b from-[#c2cfdc] to-[#d8e4f0] pr-1 pb-px pl-1">
        <h1 className="flex-1 text-[16px] leading-[20px]">기본 트레이</h1>
        <button type="button" aria-label="고정" className="mr-[9px]">
          <svg width="8" height="10" viewBox="0 0 8 10" aria-hidden="true" fill="none" stroke="#000"><path d="M1.500 .500 H6 V5.500 M2 .500 V5.500 M0 6 H8 M4 6 V10" strokeWidth="1.300" /><path d="M5.500 0 V6" strokeWidth="1.600" /></svg>
        </button>
        <button type="button" aria-label="닫기" className="flex size-3 items-center justify-center bg-[#c2504e]">
          <svg width="6" height="6" viewBox="0 0 6 6" aria-hidden="true"><path d="M.500 .500 L5.500 5.500 M5.500 .500 L.500 5.500" stroke="#fff" strokeWidth="1.500" /></svg>
        </button>
      </header>
      <div className="flex min-h-0 flex-1">
        <div className="flex min-w-0 flex-1 flex-col">
          <section className="h-[94px] shrink-0 pl-1 text-[12px]">
            <h3 className="leading-[18px]">표시:</h3>
            <div className="mt-[2px] grid h-[66px] grid-rows-3 pl-[70px]">
              <GrayCheck label="면에" checked />
              <GrayCheck label="바닥에" checked />
              <GrayCheck label="가장자리에" />
            </div>
          </section>
          <PanelHead title="가장자리 부드럽게" />
          <section className="h-[149px] shrink-0 text-[12px] text-[#9c9c9c]">
            <div className="pt-[11px] pl-[10px] leading-[16px]">법선 간 각도:</div>
            <div className="mt-[10px] pl-[135px] leading-[16px]"><span className="text-[14px]">17.3</span>&nbsp; 도</div>
            <div className="mt-[12px] pr-[23px] pl-4">
              <input
                type="range" disabled aria-label="법선 간 각도" min="0" max="180" defaultValue="19"
                className="block h-[18px] w-full appearance-none bg-transparent [&::-webkit-slider-runnable-track]:h-[4px] [&::-webkit-slider-runnable-track]:border-t-2 [&::-webkit-slider-runnable-track]:border-b-2 [&::-webkit-slider-runnable-track]:border-t-[#8a8a8a] [&::-webkit-slider-runnable-track]:border-b-white [&::-webkit-slider-thumb]:-mt-[9px] [&::-webkit-slider-thumb]:h-[17px] [&::-webkit-slider-thumb]:w-[8px] [&::-webkit-slider-thumb]:appearance-none [&::-webkit-slider-thumb]:rounded-b-[4px] [&::-webkit-slider-thumb]:border [&::-webkit-slider-thumb]:border-t-[#ccc] [&::-webkit-slider-thumb]:border-r-[#666] [&::-webkit-slider-thumb]:border-b-[#777] [&::-webkit-slider-thumb]:border-l-[#ccc] [&::-webkit-slider-thumb]:bg-[#f6f6f6]"
              />
              <div className="mt-px flex justify-between px-1"><span className="h-[3px] w-px bg-black" /><span className="h-[3px] w-px bg-black" /></div>
            </div>
            <div className="mt-[7px] grid h-[40px] grid-rows-2 pl-[9px]">
              <GrayCheck label="법선 부드럽게" checked />
              <GrayCheck label="동일 평면 부드럽게" />
            </div>
          </section>
          <PanelHead title="레이어" />
          <div className="flex h-[33px] shrink-0 items-center pr-[1px] pl-[3px]">
            <IconBtn label="레이어 추가"><Plus /></IconBtn>
            <IconBtn label="레이어 삭제" disabled w="w-[30px]"><Minus /></IconBtn>
            <div className="flex-1" />
            <IconBtn label="세부 정보"><Details /></IconBtn>
          </div>
          <div className="h-[218px] shrink-0 bg-white">
            <table className="w-full table-fixed border-separate border-spacing-0 text-[12px]">
              <thead>
                <tr className="h-5 bg-[#f1f1f1] text-left leading-[16px]">
                  <th className="border-t border-r-2 border-b-2 border-t-white border-r-[#868686] border-b-[#868686] pl-[6px] font-normal">이름</th>
                  <th className="w-[50px] border-t border-r-2 border-b-2 border-t-white border-r-[#868686] border-b-[#868686] pl-[6px] font-normal">보기</th>
                  <th className="w-[40px] border-t border-r-2 border-b-2 border-t-white border-r-[#868686] border-b-[#868686] pl-[6px] font-normal">색상</th>
                </tr>
              </thead>
              <tbody>
                <tr className="h-[27px]">
                  <td>
                    <label className="flex items-center gap-[6px] pl-[6px] text-[13px] leading-[18px]">
                      <input type="radio" name="layer" defaultChecked className="size-[13px] appearance-none rounded-full border border-[#333] bg-black shadow-[inset_0_0_0_1px_#fff]" />
                      Layer0
                    </label>
                  </td>
                  <td>
                    <label className="ml-[18px] grid w-[15px] place-items-center">
                      <input type="checkbox" defaultChecked aria-label="Layer0 보기" className="size-[15px] appearance-none border border-[#333] bg-white [grid-area:1/1]" />
                      <svg viewBox="0 0 11 9" width="11" height="9" className="pointer-events-none [grid-area:1/1]" aria-hidden="true"><path d="M1 4 L4 7.500 L10 1" fill="none" stroke="#111" strokeWidth="1.500" /></svg>
                    </label>
                  </td>
                  <td><button type="button" aria-label="Layer0 색상" className="ml-[10px] block size-5 border border-[#e08080] bg-[#ff5656]" /></td>
                </tr>
              </tbody>
            </table>
          </div>
          <div className="my-[2px] h-[6px] shrink-0 border border-[#b0b0b0] bg-[#f4f4f4]" />
          <PanelHead title="장면" />
          <div className="flex h-[33px] shrink-0 items-center border-b border-[#9a9a9a] pr-[1px] pl-[3px]">
            <IconBtn label="장면 업데이트" disabled>
              <svg width="17" height="17" viewBox="0 0 17 17" aria-hidden="true" fill="none" stroke="#858585" strokeWidth="2"><path d="M2 6.500 Q5 2 9 2.500 Q12 3 14 5.500 M15 10.500 Q12 15 8 14.500 Q5 14 3 11.500" /><path d="M15.500 1.500 V6.500 H10.500 Z M1.500 15.500 V10.500 H6.500 Z" fill="#858585" stroke="none" /></svg>
            </IconBtn>
            <IconBtn label="장면 추가"><Plus /></IconBtn>
            <IconBtn label="장면 제거" disabled w="w-[28px]"><Minus /></IconBtn>
            <div className="flex-1" />
            <IconBtn label="장면 아래로" disabled w="w-6"><svg width="8" height="14" viewBox="0 0 8 14" aria-hidden="true"><path d="M7 2 Q3.500 1 3.500 5 V10" fill="none" stroke="#8a8a8a" strokeWidth="2.500" /><path d="M0 9 H7 L3.500 13 Z" fill="#8a8a8a" /></svg></IconBtn>
            <IconBtn label="장면 위로" disabled w="w-6"><svg width="8" height="14" viewBox="0 0 8 14" aria-hidden="true"><path d="M1 12 Q4.500 13 4.500 9 V4" fill="none" stroke="#8a8a8a" strokeWidth="2.500" /><path d="M1 5 H8 L4.500 1 Z" fill="#8a8a8a" /></svg></IconBtn>
            <IconBtn label="보기 옵션" w="w-[34px]"><svg width="25" height="18" viewBox="0 0 25 18" aria-hidden="true" fill="none" stroke="#111"><path d="M1 2 H6 V7 H1 Z M1 12 H6 V17 H1 Z" strokeWidth="1.600" /><path d="M9 2 H16 M9 4.500 H16 M9 7 H13 M9 12 H16 M9 14.500 H16 M9 17 H13" strokeWidth="1.500" /><path d="M19 8 H25 L22 11 Z" fill="#000" stroke="none" /></svg></IconBtn>
            <IconBtn label="세부 정보 표시"><svg width="12" height="18" viewBox="0 0 12 18" aria-hidden="true"><path d="M.500 .500 H11.500 V8 H.500 Z" fill="#fff" stroke="#111" /><path d="M2 2 H10 L6 6.500 Z" fill="#000" /><path d="M0 8 H12 V18 H0 Z" fill="#000" /><path d="M6 10 V16 M3 13 H9" stroke="#fff" strokeWidth="1.800" /></svg></IconBtn>
            <IconBtn label="메뉴"><Details /></IconBtn>
          </div>
          <div className="flex-1 bg-white" />
        </div>
        <div className="flex w-[21px] shrink-0 flex-col items-center pt-2 pb-1">
          <button type="button" aria-label="위로"><Chevron d="M1 7 L5 2.500 L9 7" /></button>
          <div className="flex-1" />
          <div className="mb-[68px] h-[21px] w-full bg-[#cdcdcd]" />
          <button type="button" aria-label="아래로"><Chevron d="M1 1 L5 5.500 L9 1" /></button>
        </div>
      </div>
    </aside>
  );
}

function StatusBar() {
  return (
    <footer className="flex h-[26px] shrink-0 items-end bg-[#f1f1f1] text-black">
      <div className="flex gap-[17px] pl-[7px]">
        <button type="button" aria-label="지리적 위치">
          <svg width="18" height="18" viewBox="0 0 18 18" aria-hidden="true"><circle cx="9" cy="9" r="8" fill="#f4f4f4" stroke="#a0a0a0" strokeWidth="1.400" /><path d="M9 15 L7.500 9.500 Q5.500 8 6 5.500 Q7 3.500 9 3.500 Q11 3.500 12 5.500 Q12.500 8 10.500 9.500 Z" fill="#999" /></svg>
        </button>
        <button type="button" aria-label="크레딧">
          <svg width="18" height="18" viewBox="0 0 18 18" aria-hidden="true"><circle cx="9" cy="9" r="8" fill="#fff" stroke="#000" strokeWidth="1.600" /><circle cx="9" cy="4.500" r="1.500" /><path d="M6.500 6.500 H11.500 V11 H10.500 V15 H7.500 V11 H6.500 Z" /></svg>
        </button>
        <button type="button" aria-label="로그인">
          <svg width="18" height="18" viewBox="0 0 18 18" aria-hidden="true"><circle cx="9" cy="9" r="8" fill="#f4f4f4" stroke="#a0a0a0" strokeWidth="1.400" /><circle cx="9" cy="6.500" r="3.500" fill="#999" /><path d="M3 14.500 Q4 11 9 11 Q14 11 15 14.500 Q12 17 9 17 Q6 17 3 14.500 Z" fill="#999" /></svg>
        </button>
      </div>
      <div className="mb-[3px] ml-3 h-[14px] w-px bg-[#777]" />
      <p className="ml-[10px] flex-1 text-[17px] leading-[20px] whitespace-nowrap">개체를 선택하십시오. 선택을 확대하려면 Shift를 누르십시오. 여러 항목을 선택하려면 마우스를 끄십시오.</p>
      <div className="mb-[2px] h-[14px] w-px bg-[#777]" />
      <label htmlFor="unit" className="ml-[10px] text-[17px] leading-[20px]">단위</label>
      <input id="unit" readOnly className="mr-1 ml-[9px] h-[21px] w-[251px] border border-b-0 border-[#a9b6c6] bg-[#f0f0f0]" />
    </footer>
  );
}

export default function App() {
  return (
    <div className="flex h-screen min-h-[1000px] flex-col bg-black py-[42px] font-['Noto_Sans','Noto_Sans_CJK_KR',sans-serif]">
      <nav aria-label="메뉴" className="flex h-[26px] shrink-0 items-center gap-[14px] bg-white pl-[7px] text-[16px] leading-[20px] text-black">
        {MENUS.map((m) => <button key={m} type="button">{m}</button>)}
      </nav>
      <TopBar />
      <div className="flex min-h-0 flex-1 bg-[#f1f1f1]">
        <SideBar />
        <Viewport />
        <Tray />
      </div>
      <StatusBar />
    </div>
  );
}
